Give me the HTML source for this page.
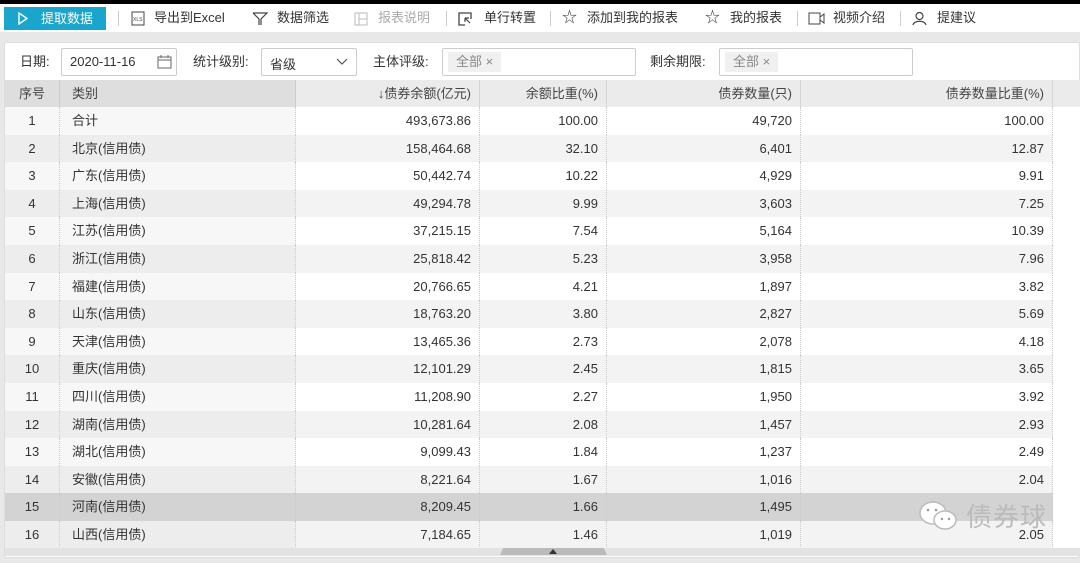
<!DOCTYPE html><html><head><meta charset="utf-8"><style>
*{margin:0;padding:0;box-sizing:border-box}
body{width:1080px;height:563px;overflow:hidden;background:#e8e8e8;font-family:"Liberation Sans","Noto Sans CJK SC",sans-serif;font-size:13px;color:#333;position:relative}
.abs{position:absolute}
#top{left:0;top:0;width:1080px;height:4px;background:#000}
#tb{left:0;top:4px;width:1080px;height:28px;background:#fff}
.ti{position:absolute;top:0;height:28px;line-height:28px;font-size:13px;color:#333;white-space:nowrap}
.sep{position:absolute;top:7px;width:1px;height:15px;background:#ccc}
#panel{left:4px;top:42px;width:1076px;height:516px;background:#fff;border:1px solid #ddd;border-radius:3px}
.lbl{position:absolute;top:48px;height:28px;line-height:28px;font-size:13px}
.inp{position:absolute;top:48px;height:28px;border:1px solid #ccc;border-radius:2px;background:#fff}
.tag{position:absolute;top:3px;left:5px;height:20px;line-height:20px;padding:0 8px;background:#f0f0f0;color:#888;font-size:13px}
.row{position:absolute;left:5px;width:1075px;height:27.6px;line-height:27px}
.c{position:absolute;top:0;height:100%;white-space:nowrap;border-right:1px dotted #ccc}
.r{text-align:right;padding-right:8px}
</style></head><body>
<div id="top" class="abs"></div>
<div id="tb" class="abs">
<div class="abs" style="left:4px;top:3px;width:102px;height:23px;background:#1aa6cc;color:#fff;line-height:23px;font-size:13px"><svg class="abs" style="left:14px;top:5px" width="10" height="13"><path d="M1 1L9 6.5L1 12Z" fill="none" stroke="#fff" stroke-width="1.4"/></svg><span style="position:absolute;left:37px">提取数据</span></div>
<div class="sep" style="left:118px"></div>
<svg class="abs" style="left:130px;top:7px" width="16" height="15"><rect x="2" y="1" width="12" height="13" fill="none" stroke="#444"/><text x="3" y="10" font-size="5" font-family="Liberation Sans" fill="#444">XLS</text></svg>
<div class="ti" style="left:154px">导出到Excel</div>
<svg class="abs" style="left:252px;top:8px" width="16" height="14"><path d="M1 1H15L9 7V13M7 13V7L1 1" fill="none" stroke="#444" stroke-width="1.2"/></svg>
<div class="ti" style="left:277px">数据筛选</div>
<svg class="abs" style="left:354px;top:8px" width="14" height="14"><rect x="1" y="1" width="12" height="12" fill="none" stroke="#bbb"/><path d="M5 1V13M5 7H13" stroke="#bbb"/></svg>
<div class="ti" style="left:378px;color:#aaa">报表说明</div>
<div class="sep" style="left:446px"></div>
<svg class="abs" style="left:458px;top:8px" width="15" height="15"><path d="M13 7V1H1V13H7" fill="none" stroke="#444" stroke-width="1.3"/><path d="M7 6L12 11M7 6V10M7 6H11" stroke="#444" stroke-width="1.2" fill="none"/></svg>
<div class="ti" style="left:484px">单行转置</div>
<div class="sep" style="left:550px"></div>
<div class="ti" style="left:562px;font-size:15px">☆</div>
<div class="ti" style="left:587px">添加到我的报表</div>
<div class="ti" style="left:705px;font-size:15px">☆</div>
<div class="ti" style="left:730px">我的报表</div>
<div class="sep" style="left:797px"></div>
<svg class="abs" style="left:808px;top:8px" width="17" height="13"><rect x="1" y="1" width="11" height="11" fill="none" stroke="#444"/><path d="M12 5L16 2V11L12 8" fill="none" stroke="#444"/></svg>
<div class="ti" style="left:833px">视频介绍</div>
<div class="sep" style="left:900px"></div>
<svg class="abs" style="left:912px;top:7px" width="15" height="15"><circle cx="7.5" cy="5" r="3.5" fill="none" stroke="#444" stroke-width="1.2"/><path d="M1 14C2 9 13 9 14 14" fill="none" stroke="#444" stroke-width="1.2"/></svg>
<div class="ti" style="left:937px">提建议</div>
</div>
<div id="panel" class="abs"></div>
<div class="lbl" style="left:20px">日期:</div>
<div class="inp" style="left:61px;width:116px"><span style="position:absolute;left:8px;top:5px">2020-11-16</span><svg class="abs" style="left:95px;top:6px" width="15" height="14"><rect x="1" y="2" width="13" height="11" fill="none" stroke="#666"/><path d="M1 5H14M4 0V3M11 0V3" stroke="#666"/></svg></div>
<div class="lbl" style="left:193px">统计级别:</div>
<div class="inp" style="left:261px;width:96px"><span style="position:absolute;left:8px;top:5px">省级</span><svg class="abs" style="left:74px;top:9px" width="12" height="8"><path d="M1 1L6 6L11 1" fill="none" stroke="#555" stroke-width="1.2"/></svg></div>
<div class="lbl" style="left:373px">主体评级:</div>
<div class="inp" style="left:442px;width:194px"><div class="tag">全部 ×</div></div>
<div class="lbl" style="left:650px">剩余期限:</div>
<div class="inp" style="left:719px;width:194px"><div class="tag">全部 ×</div></div>
<div class="abs" style="left:5px;top:80px;width:1075px;height:27px;line-height:27px;background:#ebebeb;color:#444">
<div class="c" style="left:0;width:55px;background:#dedede;text-align:center;border-right:1px solid #ccc">序号</div>
<div class="c" style="left:55px;width:236px;background:#dedede;padding-left:12px;border-right:1px solid #ccc">类别</div>
<div class="c r" style="left:291px;width:184px;border-right:1px solid #d5d5d5">↓债券余额(亿元)</div>
<div class="c r" style="left:475px;width:127px;border-right:1px solid #d5d5d5">余额比重(%)</div>
<div class="c r" style="left:602px;width:194px;border-right:1px solid #d5d5d5">债券数量(只)</div>
<div class="c r" style="left:796px;width:252px;border-right:1px solid #d5d5d5">债券数量比重(%)</div>
</div>
<div id="rows"></div>
<div class="abs" style="left:5px;top:548px;width:1075px;height:8px;background:#e3e3e3"></div>
<div class="abs" style="left:500px;top:548px;width:107px;height:7px;background:#bbb;clip-path:polygon(3% 0,97% 0,100% 100%,0 100%)"></div>
<div class="abs" style="left:549px;top:549px;width:0;height:0;border-left:4px solid transparent;border-right:4px solid transparent;border-bottom:5px solid #333"></div>
<div class="abs" style="left:918px;top:497px;font-size:26px;color:#bbb;letter-spacing:1px"><svg style="vertical-align:-6px;margin-right:6px" width="42" height="32"><ellipse cx="15" cy="13" rx="13" ry="11" fill="#fff" stroke="#bbb" stroke-width="1.5"/><ellipse cx="27" cy="20" rx="11" ry="9" fill="#fff" stroke="#bbb" stroke-width="1.5"/><circle cx="10" cy="10" r="1.3" fill="#999"/><circle cx="18" cy="10" r="1.3" fill="#999"/><circle cx="24" cy="19" r="1.2" fill="#999"/><circle cx="31" cy="19" r="1.2" fill="#999"/></svg>债券球</div>
<script>
var d=[["合计","493,673.86","100.00","49,720","100.00"],["北京","158,464.68","32.10","6,401","12.87"],["广东","50,442.74","10.22","4,929","9.91"],["上海","49,294.78","9.99","3,603","7.25"],["江苏","37,215.15","7.54","5,164","10.39"],["浙江","25,818.42","5.23","3,958","7.96"],["福建","20,766.65","4.21","1,897","3.82"],["山东","18,763.20","3.80","2,827","5.69"],["天津","13,465.36","2.73","2,078","4.18"],["重庆","12,101.29","2.45","1,815","3.65"],["四川","11,208.90","2.27","1,950","3.92"],["湖南","10,281.64","2.08","1,457","2.93"],["湖北","9,099.43","1.84","1,237","2.49"],["安徽","8,221.64","1.67","1,016","2.04"],["河南","8,209.45","1.66","1,495",""],["山西","7,184.65","1.46","1,019","2.05"]];
var h="";d.forEach(function(r,i){var odd=i%2==0,hl=i==14;var bg=hl?"#d3d3d3":(odd?"#fff":"#f3f3f3");var bl=hl?"#d3d3d3":(odd?"#f7f7f7":"#ededed");
var nm=i==0?r[0]:r[0]+"(信用债)";var top=107+i*27.6;var ht=27.6;
h+='<div class="row" style="top:'+top+'px;height:'+ht+'px;background:'+bg+'"><div class="c" style="left:0;width:55px;background:'+bl+';text-align:center">'+(i+1)+'</div><div class="c" style="left:55px;width:236px;background:'+bl+';padding-left:12px">'+nm+'</div><div class="c r" style="left:291px;width:184px">'+r[1]+'</div><div class="c r" style="left:475px;width:127px">'+r[2]+'</div><div class="c r" style="left:602px;width:194px">'+r[3]+'</div><div class="c r" style="left:796px;width:252px">'+r[4]+'</div><div class="abs" style="left:1048px;top:0;width:27px;height:100%;background:#fff"></div></div>';});
document.getElementById("rows").innerHTML=h;
</script>
</body></html>
